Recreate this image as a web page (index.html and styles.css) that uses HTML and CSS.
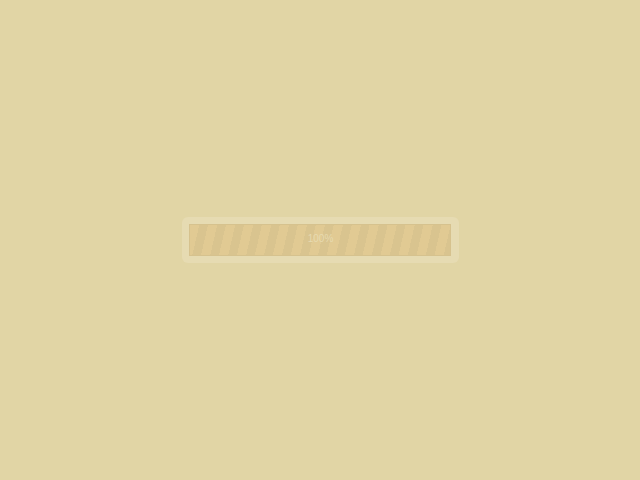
FILE: index.html
```html
<!DOCTYPE html>
<html>
<head>
<meta charset="utf-8">
<link rel="stylesheet" href="styles.css">
</head>
<body>
<div class="page">
  <div class="frame">
    <div class="bar">
      <span class="label">100%</span>
    </div>
  </div>
</div>
</body>
</html>
```
FILE: styles.css
```css
html, body {
  margin: 0;
  padding: 0;
  background: #e1d5a5;
}
.page {
  width: 640px;
  height: 480px;
  display: flex;
  align-items: flex-start;
  justify-content: flex-start;
  padding: 217px 0 0 182px;
  box-sizing: border-box;
}
.frame {
  width: 277px;
  height: 46px;
  box-sizing: border-box;
  padding: 7px 8px 7px 7px;
  background: #e6dbb2;
  border-radius: 6px;
}
.bar {
  height: 32px;
  box-sizing: border-box;
  border: 1px solid #d6c28e;
  background-color: #e1ca93;
  background-image: repeating-linear-gradient(103deg, #e1ca93 0px, #e1ca93 9px, #d9c48f 9px, #d9c48f 17.5px);
  display: flex;
  align-items: center;
  justify-content: center;
  padding-bottom: 2px;
}
.label {
  font-family: "Liberation Sans", Arial, sans-serif;
  font-size: 10px;
  line-height: 12px;
  color: #e7dab0;
  padding-left: 1px;
}
```
